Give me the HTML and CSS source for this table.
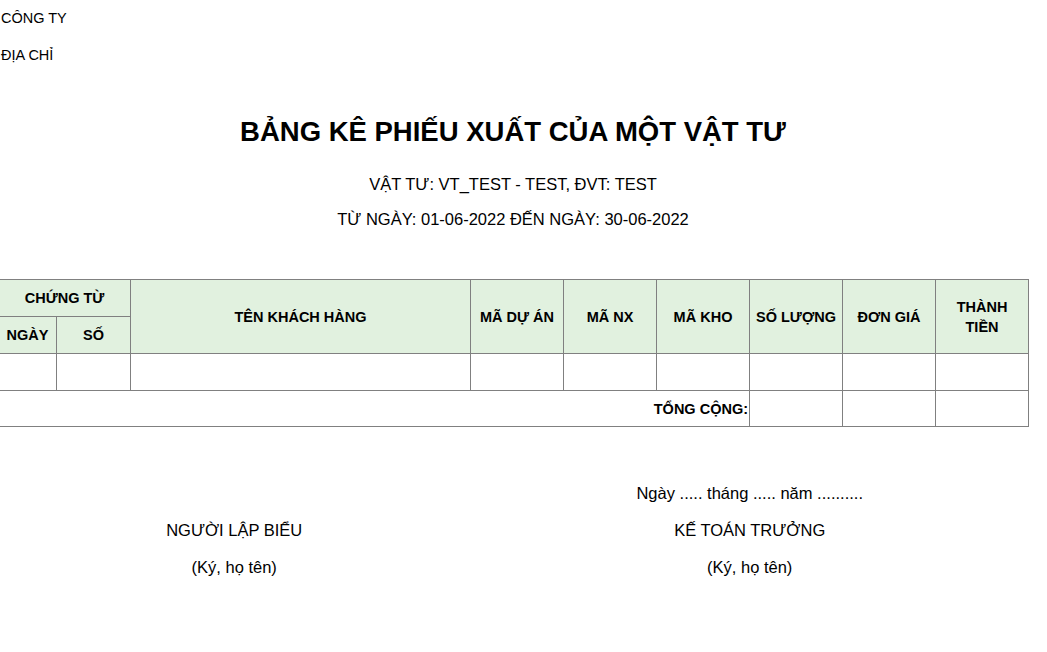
FILE: index.html
```html
<!DOCTYPE html>
<html lang="vi">
<head>
<meta charset="utf-8">
<title>Bảng kê phiếu xuất của một vật tư</title>
<link rel="stylesheet" href="styles.css">
</head>
<body>
<div class="page">
  <div class="company">
    <p class="info">CÔNG TY</p>
    <p class="info">ĐỊA CHỈ</p>
  </div>
  <div class="heading">
    <h1 class="title">BẢNG KÊ PHIẾU XUẤT CỦA MỘT VẬT TƯ</h1>
    <p class="sub">VẬT TƯ: VT_TEST - TEST, ĐVT: TEST</p>
    <p class="sub">TỪ NGÀY: 01-06-2022 ĐẾN NGÀY: 30-06-2022</p>
  </div>
  <table class="report">
    <colgroup>
      <col class="c-ngay"><col class="c-so"><col class="c-ten">
      <col class="c-std"><col class="c-std"><col class="c-std"><col class="c-std"><col class="c-std"><col class="c-std">
    </colgroup>
    <thead>
      <tr>
        <th colspan="2">CHỨNG TỪ</th>
        <th rowspan="2">TÊN KHÁCH HÀNG</th>
        <th rowspan="2">MÃ DỰ ÁN</th>
        <th rowspan="2">MÃ NX</th>
        <th rowspan="2">MÃ KHO</th>
        <th rowspan="2">SỐ LƯỢNG</th>
        <th rowspan="2">ĐƠN GIÁ</th>
        <th rowspan="2">THÀNH<br>TIỀN</th>
      </tr>
      <tr>
        <th>NGÀY</th>
        <th>SỐ</th>
      </tr>
    </thead>
    <tbody>
      <tr class="data">
        <td></td><td></td><td></td><td></td><td></td><td></td><td></td><td></td><td></td>
      </tr>
      <tr class="total">
        <td colspan="6" class="total-label">TỔNG CỘNG:</td>
        <td></td><td></td><td></td>
      </tr>
    </tbody>
  </table>
  <table class="sign">
    <colgroup>
      <col class="c-ngay"><col class="c-so"><col class="c-ten">
      <col class="c-std"><col class="c-std"><col class="c-std"><col class="c-std"><col class="c-std"><col class="c-std">
    </colgroup>
    <tbody>
      <tr>
        <td colspan="3"></td>
        <td colspan="6">Ngày ..... tháng ..... năm ..........</td>
      </tr>
      <tr>
        <td colspan="3">NGƯỜI LẬP BIỂU</td>
        <td colspan="6">KẾ TOÁN TRƯỞNG</td>
      </tr>
      <tr>
        <td colspan="3">(Ký, họ tên)</td>
        <td colspan="6">(Ký, họ tên)</td>
      </tr>
    </tbody>
  </table>
</div>
</body>
</html>
```
FILE: styles.css
```css
html, body {
  margin: 0;
  padding: 0;
  background: #ffffff;
}
body {
  font-family: "Liberation Sans", Arial, sans-serif;
  color: #000000;
  overflow: hidden;
}
.page {
  width: 1026px;
}
.company {
  padding-left: 1px;
  padding-top: 9px;
}
.info {
  margin: 0;
  font-size: 14.5px;
  line-height: 18px;
  height: 37px;
}
.heading {
  text-align: center;
  padding-top: 34px;
}
.title {
  margin: 0;
  font-size: 27.5px;
  line-height: 30px;
  font-weight: bold;
}
.sub {
  margin: 0;
  font-size: 16.5px;
  line-height: 18px;
}
.title + .sub {
  margin-top: 28px;
}
.sub + .sub {
  margin-top: 17px;
}
.report {
  margin-top: 51px;
  margin-left: -2px;
  border-collapse: collapse;
  table-layout: fixed;
  width: 1031px;
}
.c-ngay { width: 58px; }
.c-so { width: 74px; }
.c-ten { width: 340px; }
.c-std { width: 93px; }
.report th, .report td {
  border: 1px solid #808080;
  padding: 0;
}
.report th {
  background: #e1f1df;
  font-size: 14.5px;
  font-weight: bold;
  line-height: 20px;
  height: 36px;
  text-align: center;
  vertical-align: middle;
}
.report .data td {
  height: 36px;
}
.report .total td {
  height: 35px;
}
.report .total-label {
  text-align: right;
  font-weight: bold;
  font-size: 14.5px;
  padding-right: 1px;
}
.sign {
  margin-top: 57px;
  margin-left: -2px;
  border-collapse: collapse;
  table-layout: fixed;
  width: 1031px;
}
.sign td {
  padding: 0;
  text-align: center;
  font-size: 16.5px;
  line-height: 18px;
  height: 37px;
  vertical-align: top;
}
```
